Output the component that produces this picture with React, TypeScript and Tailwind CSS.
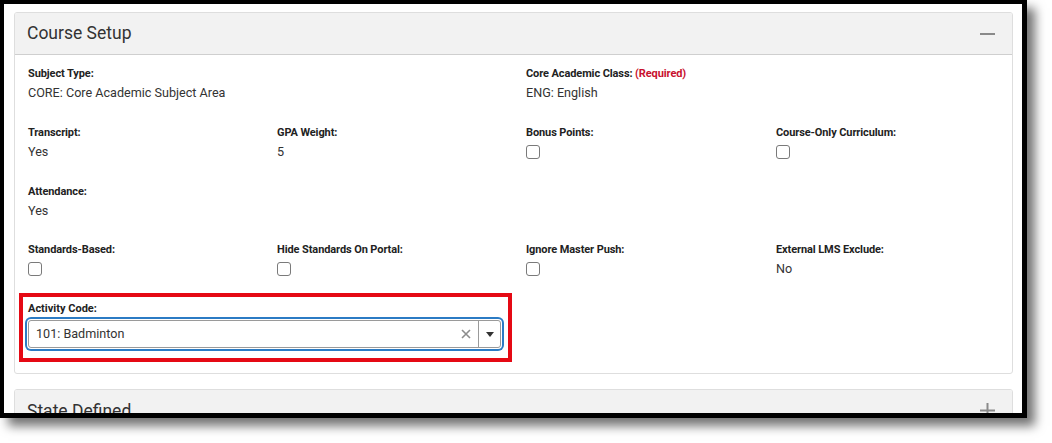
import React from 'react';

type Field = { label: string; value?: string; check?: boolean; required?: boolean; span?: boolean };

const rows: Field[][] = [
  [
    { label: 'Subject Type:', value: 'CORE: Core Academic Subject Area', span: true },
    { label: 'Core Academic Class:', value: 'ENG: English', required: true, span: true },
  ],
  [
    { label: 'Transcript:', value: 'Yes' },
    { label: 'GPA Weight:', value: '5' },
    { label: 'Bonus Points:', check: true },
    { label: 'Course-Only Curriculum:', check: true },
  ],
  [{ label: 'Attendance:', value: 'Yes' }],
  [
    { label: 'Standards-Based:', check: true },
    { label: 'Hide Standards On Portal:', check: true },
    { label: 'Ignore Master Push:', check: true },
    { label: 'External LMS Exclude:', value: 'No' },
  ],
];

function Checkbox() {
  return <div className="mt-[5px] w-[14px] h-[14px] rounded-[3px] border border-[#7a7a7a] bg-white" />;
}

function FieldCell({ f }: { f: Field }) {
  return (
    <div className={f.span ? 'col-span-2' : ''}>
      <div className="text-[11px] leading-[14px] font-bold text-[#222] tracking-[-0.1px]">
        {f.label}
        {f.required && <span className="text-[#c8102e]"> (Required)</span>}
      </div>
      {f.check ? (
        <Checkbox />
      ) : (
        <div className="mt-[3px] text-[12.6px] leading-[18px] text-[#333]">{f.value}</div>
      )}
    </div>
  );
}

function PanelHeader({ title, open }: { title: string; open: boolean }) {
  return (
    <div className="h-[42px] flex items-center justify-between pl-[12px] pr-[17px] bg-[#f2f2f2] border-b border-[#cfcfcf]">
      <span className="text-[17.5px] text-[#333]">{title}</span>
      {open ? (
        <div className="w-[15px] h-[2px] bg-[#8a8a8a]" />
      ) : (
        <svg width="15" height="15" viewBox="0 0 15 15">
          <rect x="0" y="6.5" width="15" height="2" fill="#8a8a8a" />
          <rect x="6.5" y="0" width="2" height="15" fill="#8a8a8a" />
        </svg>
      )}
    </div>
  );
}

export default function App() {
  return (
    <div className="w-[1052px] h-[443px] bg-white font-['Roboto','Liberation_Sans',sans-serif]">
      <div className="w-[1027px] h-[418px] border-black border-t-4 border-l-4 border-r-[5px] border-b-[5px] bg-white overflow-hidden shadow-[8px_8px_10px_rgba(0,0,0,0.55)]">
        <div className="pt-[8px] pl-[10px] pr-[9px]">
          <div className="rounded-[3px] border border-[#dedede] overflow-hidden">
            <PanelHeader title="Course Setup" open />
            <div className="pt-[12px] pl-[13px] pb-[11px]">
              <div className="grid grid-cols-[249px_249px_250px_1fr] gap-y-[23.75px]">
                {rows.map((r, i) => (
                  <React.Fragment key={i}>
                    {r.map((f) => (
                      <FieldCell key={f.label} f={f} />
                    ))}
                    {r.length === 1 && <div className="col-span-3" />}
                  </React.Fragment>
                ))}
              </div>

              <div className="mt-[15px] ml-[-9px] w-[493px] h-[69px] border-4 border-[#e50914] pt-[5px] pl-[5px]">
                <div className="text-[11px] leading-[14px] font-bold text-[#222]">Activity Code:</div>
                <div className="mt-[4px] w-[473px] h-[28px] flex items-center rounded-[3px] border border-[#9a9a9a] bg-white ring-2 ring-[#2b7bc4] ring-offset-1">
                  <span className="flex-1 pl-[7px] text-[12.6px] text-[#333]">101: Badminton</span>
                  <div className="w-[24px] h-full flex items-center justify-center">
                    <svg width="10" height="10" viewBox="0 0 10 10">
                      <path d="M1 1 L9 9 M9 1 L1 9" stroke="#8c8c8c" strokeWidth="1.6" />
                    </svg>
                  </div>
                  <div className="w-px h-full bg-[#9a9a9a]" />
                  <div className="w-[21px] h-full flex items-center justify-center">
                    <svg width="8" height="5" viewBox="0 0 8 5">
                      <path d="M0 0 L8 0 L4 5 Z" fill="#333" />
                    </svg>
                  </div>
                </div>
              </div>
            </div>
          </div>

          <div className="mt-[15px] rounded-[3px] border border-[#dedede] overflow-hidden">
            <PanelHeader title="State Defined" open={false} />
          </div>
        </div>
      </div>
    </div>
  );
}
